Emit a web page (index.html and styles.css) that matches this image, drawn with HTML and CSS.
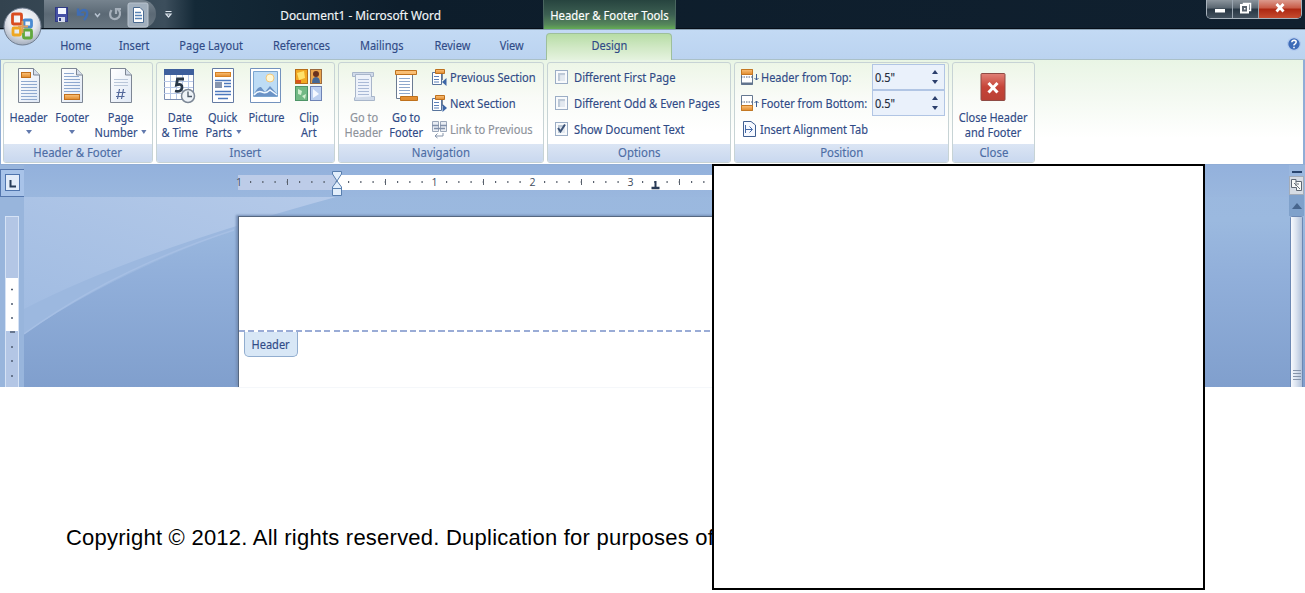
FILE: index.html
```
<!DOCTYPE html>
<html lang="en">
<head>
<meta charset="utf-8">
<title>Document1 - Microsoft Word</title>
<link rel="stylesheet" href="styles.css">
</head>
<body>
<svg class="defs" width="0" height="0">
  <defs>
    <linearGradient id="paper" x1="0" y1="0" x2="1" y2="1"><stop offset="0" stop-color="#fff"/><stop offset="1" stop-color="#dfe8f5"/></linearGradient>
    <linearGradient id="amber" x1="0" y1="0" x2="0" y2="1"><stop offset="0" stop-color="#fbc27a"/><stop offset="1" stop-color="#e08a2c"/></linearGradient>
    <radialGradient id="orb" cx=".5" cy=".35" r=".65"><stop offset="0" stop-color="#fff"/><stop offset=".6" stop-color="#e3e6ec"/><stop offset="1" stop-color="#a3adbd"/></radialGradient>
    <symbol id="page" viewBox="0 0 24 36"><path d="M1.5 .5H16.5L22.500 7V34.500H1.500Z" fill="url(#paper)" stroke="#7d8694"/><path d="M16.500 .5V7H22.500" fill="#d5deeb" stroke="#7d8694"/></symbol>
    <symbol id="section" viewBox="0 0 16 18"><path d="M1.500 4.500H10.500V16.500H1.500Z" fill="#fff" stroke="#58749c"/><path d="M3 8.500H8M3 11.500H8M3 14H8" stroke="#5d81b8"/><path d="M4.500 1.500H13.500V5.500H4.500Z" fill="url(#amber)" stroke="#bd701d"/><path d="M11.500 6V12" stroke="#7b8797"/></symbol>
  </defs>
</svg>

<div class="window">
  <header class="titlebar">
    <div class="quick">
      <svg width="130" height="29" viewBox="0 0 130 29">
        <rect x="11.500" y="7.500" width="12" height="14" fill="#4550a5" stroke="#303b83"/><path d="M14 8H22V14H14Z" fill="#f4f7ff"/><path d="M14 17H21V22H14Z" fill="#d5dbed"/><path d="M15 18H17V21H15Z" fill="#303c82"/>
        <path d="M34 8.500V14.500H40M34.500 14Q38 8 42.500 11Q45 14 40 20" fill="none" stroke="#3f6db4" stroke-width="2.400"/>
        <path d="M51 13.500L53.500 16.500L56 13.500" fill="none" stroke="#b7c3d0" stroke-width="1.500"/>
        <path d="M67.500 10Q65 14 67 17.500Q71 21 75 17Q77.500 12 74 9.500M77 9H72V14" fill="none" stroke="#a5afba" stroke-width="2.200"/>
        <rect x="84" y="3" width="20" height="24" rx="2" fill="#a1afbd" stroke="#bac4ce"/><path d="M89.500 7.500H96L99.500 11V22.500H89.500Z" fill="#fff" stroke="#4b6b91"/><path d="M91 12.500H97M91 15.500H98M91 18.500H98" stroke="#5783b5" stroke-width="1.500"/>
        <path d="M121.500 11.500H127.500M122 14L124.500 17L127 14Z" fill="none" stroke="#dbe3ec" stroke-width="1.200"/>
      </svg>
    </div>
    <div class="doc-title"><span class="t">Document1 - Microsoft Word</span></div>
    <div class="context"><span class="t">Header &amp; Footer Tools</span></div>
    <div class="winbtns">
      <span class="wb min"><svg width="25" height="18"><rect x="8" y="9" width="10" height="3.500" fill="#fff"/></svg></span>
      <span class="wb max"><svg width="25" height="18"><path d="M10.500 3.500H17.500V10.500H10.500Z" fill="none" stroke="#fff" stroke-width="1.500"/><path d="M8 5H15V12.500H8Z" fill="#59636e" stroke="#fff" stroke-width="2"/><path d="M11 8H12.500V9.500H11Z" fill="#fff"/></svg></span>
      <span class="wb close"><svg width="42" height="18"><path d="M17.500 4L24.500 11.500M24.500 4L17.500 11.500" stroke="#fff" stroke-width="2.800"/></svg></span>
    </div>
  </header>
  <svg class="orb" width="42" height="48" viewBox="0 0 42 48">
    <circle cx="19.500" cy="25.500" r="18.500" fill="url(#orb)" stroke="#6f7c8e"/>
    <g fill="none" stroke-width="2.800"><rect x="9.500" y="13" width="9" height="10" rx="1" stroke="#d94c20"/><rect x="21" y="19" width="7.500" height="7" rx="1" stroke="#498bd2"/><rect x="10" y="27" width="7.500" height="7" rx="1" stroke="#eea722"/><rect x="20.500" y="29" width="8" height="8" rx="1" stroke="#61a83e"/><path d="M15 25.500H25M19.500 20V32" stroke="#dba05f" stroke-width="2"/></g>
  </svg>

  <nav class="tabs">
    <a class="tab w48"><span class="t">Home</span></a>
    <a class="tab w68"><span class="t">Insert</span></a>
    <a class="tab w87"><span class="t">Page Layout</span></a>
    <a class="tab w92"><span class="t">References</span></a>
    <a class="tab w70"><span class="t">Mailings</span></a>
    <a class="tab w70"><span class="t">Review</span></a>
    <a class="tab w50"><span class="t">View</span></a>
    <a class="tab design"><span class="t">Design</span></a>
    <svg class="help" width="14" height="16" viewBox="0 0 14 16"><circle cx="7" cy="8" r="6.300" fill="#3e6cb8" stroke="#b6cdf0" stroke-width="1.200"/><path d="M4.800 6.300Q5 4.300 7.200 4.300Q9.300 4.500 9.200 6.200Q9 7.500 7 8.800V9.600M7 10.800V12.300" stroke="#fff" stroke-width="1.500" fill="none"/></svg>
  </nav>

  <section class="ribbon">
    <div class="group g-hf">
      <div class="body">
        <div class="big w48b"><svg width="24" height="36"><use href="#page"/><rect x="4.500" y="4.500" width="9" height="5" fill="url(#amber)" stroke="#c2701d"/><path d="M4 13.500H20M4 16.500H20M4 19.500H20M4 22.500H20M4 25.500H20M4 28.500H20M4 31.500H20" stroke="#8ea8cf"/></svg><span class="t">Header</span><i class="arr"></i></div>
        <div class="big w38b"><svg width="24" height="36"><use href="#page"/><path d="M4 5.500H14M4 8.500H19M4 11.500H20M4 14.500H20M4 17.500H20M4 20.500H20M4 23.500H20" stroke="#8ea8cf"/><rect x="4.500" y="26.500" width="15" height="5" fill="url(#amber)" stroke="#c2701d"/></svg><span class="t">Footer</span><i class="arr"></i></div>
        <div class="big w60b"><svg width="24" height="36"><use href="#page"/><path d="M5 11.500H19M5 14.500H19M5 17.500H19" stroke="#b9c6d9"/><path d="M10.500 21L8.500 31M14.500 21L12.500 31M7.500 24.500H16.500M7 28.500H15.500" stroke="#53689b" stroke-width="1.200"/></svg><span class="t">Page</span><span class="t">Number <i class="arr in"></i></span></div>
      </div>
      <div class="foot"><span class="t">Header &amp; Footer</span></div>
    </div>

    <div class="group g-ins">
      <div class="body">
        <div class="big w46b"><svg width="34" height="36"><path d="M1.500 1.500H30.500V31.500H1.500Z" fill="#fff" stroke="#7b8db1"/><path d="M1 1H31V7H1Z" fill="#3e5f9c"/><path d="M1 13.500H30M1 19.500H30M1 25.500H30M7.500 7V31M13.500 7V31M19.500 7V31M25.500 7V31" stroke="#b9c9e7"/><path d="M21 11H14.500L13.500 17Q19.500 15 19 20Q18 24.500 12 23" stroke="#293747" stroke-width="2.800" fill="none"/><circle cx="25" cy="28" r="6.500" fill="#eef3f8" stroke="#7c8795" stroke-width="1.500"/><path d="M25 23.500V28.500H29" fill="none" stroke="#4c5967" stroke-width="1.300"/></svg><span class="t">Date</span><span class="t">&amp; Time</span></div>
        <div class="big w40b"><svg width="24" height="36"><path d="M1.500 .5H22.500V34.500H1.500Z" fill="#fff" stroke="#647ba3"/><rect x="4.500" y="4.500" width="15" height="4" fill="url(#amber)" stroke="#d78224"/><path d="M4 12.500H20M13 15.500H20M13 18.500H20M4 23.500H20M4 26.500H20M7 30.500H17" stroke="#4c78bd" stroke-width="1.700"/><rect x="4" y="14" width="7" height="6" fill="#8796af"/></svg><span class="t">Quick</span><span class="t">Parts <i class="arr in"></i></span></div>
        <div class="big w46b"><svg width="32" height="36"><path d="M.5 .5H30.500V34.500H.5Z" fill="#fff" stroke="#7392bd"/><path d="M3.500 3.500H27.500V28.500H3.500Z" fill="#bddcf5" stroke="#7ba6d0"/><circle cx="20" cy="10" r="4" fill="#fff7d4" stroke="#f2c77c"/><path d="M4 26Q8 18 11 19L15 24L20 18L27 26V28H4Z" fill="#6b93c6"/><path d="M4 27Q8 22 12 24T20 22L27 27" stroke="#eff8ff" fill="none" stroke-width="1.500"/></svg><span class="t">Picture</span></div>
        <div class="big w40b"><svg width="28" height="36"><rect x=".5" y="1.500" width="12" height="14" fill="#f1a922" stroke="#b66d19"/><path d="M2 5L9 3L10 10L4 12Z" fill="#ffe26b"/><path d="M1 12H6V15H1Z" fill="#d8521b"/><rect x="15.500" y="1.500" width="11" height="14" fill="#e9a54d" stroke="#9a6a3e"/><circle cx="21" cy="6" r="3" fill="#6a321d"/><path d="M17 15Q17 9 21 9T25 15Z" fill="#456895"/><rect x=".5" y="18.500" width="12" height="14" fill="#72b984" stroke="#4d9467"/><path d="M3 21L7 23L6 27L3 26ZM7 28L11 26L10 31Z" fill="#d3efd0"/><rect x="15.500" y="18.500" width="11" height="14" fill="#bcd0f0" stroke="#6e83b5"/><path d="M18 21L24 26L18 30Z" fill="#f5f9ff"/></svg><span class="t">Clip</span><span class="t">Art</span></div>
      </div>
      <div class="foot"><span class="t">Insert</span></div>
    </div>

    <div class="group g-nav">
      <div class="body">
        <div class="big w48c off"><svg width="26" height="36"><path d="M4.500 6.500H20.500V30.500H4.500Z" fill="#edf2fa" stroke="#a9b6ca"/><path d="M1.500 8.500V4.500H22.500V8.500H19.500V6.500H4.500V8.500ZM20 28.500H23.500V32.500H3.500V29.500" fill="#d1dbea" stroke="#a8b6ca"/><path d="M7 11.500H18M7 14.500H18M7 17.500H18M7 20.500H18M7 23.500H18M7 26.500H18" stroke="#aabad6"/></svg><span class="t">Go to</span><span class="t">Header</span></div>
        <div class="big w38b"><svg width="26" height="36"><path d="M3.500 5.500H19.500V30.500H3.500Z" fill="#fff" stroke="#6b7b92"/><path d="M2.500 2.500H23.500V6.500H2.500ZM7.500 28.500H24.500V32.500H7.500Z" fill="url(#amber)" stroke="#bf711c"/><path d="M6 10.500H17M6 13.500H17M6 16.500H17M6 19.500H17M6 22.500H17M6 25.500H17" stroke="#8fa8cc"/></svg><span class="t">Go to</span><span class="t">Footer</span></div>
        <div class="rows nav-rows">
          <div class="row"><svg width="18" height="19"><use href="#section" width="16" height="18"/><path d="M15.500 10V18L11 14Z" fill="#3d66a6"/></svg><span class="t">Previous Section</span></div>
          <div class="row"><svg width="18" height="19"><use href="#section" width="16" height="18"/><path d="M11.500 10V18L16 14Z" fill="#3d66a6"/></svg><span class="t">Next Section</span></div>
          <div class="row off"><svg width="18" height="19"><path d="M1.500 1.500H7.500V11.500H1.500ZM9.500 1.500H15.500V11.500H9.500Z" fill="#e9edf3" stroke="#9aa6b9"/><path d="M1 5.500H8M9 5.500H16M3 8.500H14" stroke="#8190aa" stroke-width="1.500"/><path d="M12 13V16H4M6.500 13.500L4 16L6.500 18" fill="none" stroke="#8594aa"/></svg><span class="t">Link to Previous</span></div>
        </div>
      </div>
      <div class="foot"><span class="t">Navigation</span></div>
    </div>

    <div class="group g-opt">
      <div class="body">
        <div class="rows">
          <div class="row"><i class="check"></i><span class="t">Different First Page</span></div>
          <div class="row"><i class="check"></i><span class="t">Different Odd &amp; Even Pages</span></div>
          <div class="row"><i class="check"><svg width="11" height="11"><path d="M2 5L4.500 8.500L9 1.500" fill="none" stroke="#3c5378" stroke-width="2"/></svg></i><span class="t">Show Document Text</span></div>
        </div>
      </div>
      <div class="foot"><span class="t">Options</span></div>
    </div>

    <div class="group g-pos">
      <div class="body">
        <div class="rows pos-rows">
          <div class="row"><svg width="20" height="18"><path d="M.5 1.500H11.500V16.500H.5Z" fill="#fff" stroke="#657891"/><path d="M.5 1.500H11.500V6.500H.5Z" fill="url(#amber)" stroke="#c57822"/><path d="M0 9H12" stroke="#4b6080" stroke-dasharray="1.500 1"/><path d="M0 15.500H12" stroke="#60738c" stroke-width="2"/><path d="M15.500 6V12M13.500 10L15.500 12L17.500 10" stroke="#3c5e94" fill="none"/></svg><span class="t">Header from Top:</span></div>
          <div class="row"><svg width="20" height="18"><path d="M.5 1.500H11.500V16.500H.5Z" fill="#fff" stroke="#657891"/><path d="M.5 11.500H11.500V16.500H.5Z" fill="url(#amber)" stroke="#c57822"/><path d="M0 8H12" stroke="#4b6080" stroke-dasharray="1.500 1"/><path d="M15.500 7V13M13.500 9L15.500 7L17.500 9" stroke="#3c5e94" fill="none"/></svg><span class="t">Footer from Bottom:</span></div>
          <div class="row"><svg width="19" height="18"><path d="M2.500 1.500H10L14.500 5V16.500H2.500Z" fill="#f6f9ff" stroke="#405f91"/><path d="M4.500 5V13M5 9.500H11M8.500 6.500L11.500 9.500L8.500 12.500" fill="none" stroke="#4469a8"/></svg><span class="t">Insert Alignment Tab</span></div>
        </div>
        <div class="spins">
          <div class="spin"><span class="t">0.5"</span><svg width="8" height="16"><path d="M1 5L4 1L7 5ZM1 11L4 15L7 11Z" fill="#2b3f6c"/></svg></div>
          <div class="spin"><span class="t">0.5"</span><svg width="8" height="16"><path d="M1 5L4 1L7 5ZM1 11L4 15L7 11Z" fill="#2b3f6c"/></svg></div>
        </div>
      </div>
      <div class="foot"><span class="t">Position</span></div>
    </div>

    <div class="group g-close">
      <div class="body">
        <div class="big w80b"><svg width="26" height="36"><defs><linearGradient id="red" x1="0" y1="0" x2="0" y2="1"><stop offset="0" stop-color="#e18177"/><stop offset=".5" stop-color="#c64438"/><stop offset="1" stop-color="#b94034"/></linearGradient></defs><rect x="1" y="5.500" width="24" height="27" rx="1" fill="url(#red)" stroke="#8f4b45"/><path d="M8.500 15L17.500 24.500M17.500 15L8.500 24.500" stroke="#fff" stroke-width="3"/></svg><span class="t">Close Header</span><span class="t">and Footer</span></div>
      </div>
      <div class="foot"><span class="t">Close</span></div>
    </div>
  </section>

  <main class="workspace">
    <svg class="swoosh" width="400" height="190" viewBox="0 0 400 190">
      <defs><linearGradient id="glow" x1="0" y1="1" x2="1" y2="0"><stop offset="0" stop-color="#a1bce2"/><stop offset="1" stop-color="#b5cae9"/></linearGradient></defs>
      <path d="M0 0H312Q120 55 0 137Z" fill="#9cb8df"/>
      <path d="M0 137Q90 72 210 33" fill="none" stroke="#a6bfe4" stroke-width="1.500"/>
      <path d="M0 0H312Q110 55 0 112Z" fill="url(#glow)"/>
    </svg>
    <div class="side">
      <div class="tabsel"><svg width="16" height="18"><rect x=".5" y=".5" width="14" height="16" fill="#e3ecf9" stroke="#4f74ad"/><path d="M5.500 6V12.500H11" fill="none" stroke="#263b59" stroke-width="2"/></svg></div>
      <svg class="vruler" width="14" height="171"><path d="M0 0H14V171H0Z" fill="#b3c6e5"/><path d="M.5 0V171M13.500 0V171M0 .5H14" stroke="#d5e2f5"/><path d="M1 62H13V115H1Z" fill="#fff"/><path d="M6 73.500H8M6 88H8M6 102H8M5 116H10M6 131H8M6 145H8M6 160H8" stroke="#4f5c71" stroke-width="1.300"/></svg>
    </div>
    <div class="canvas">
      <div class="hruler">
        <svg width="494" height="30" viewBox="234 167 494 30">
          <path d="M238 175H337V190H238Z" fill="#bdcce8"/><path d="M337 175H728V190H337Z" fill="#fff"/>
          <path d="M250 182H716" stroke="#59616d" stroke-width="2" stroke-dasharray="1.200 11.050"/>
          <path d="M287.500 179V185M385.500 179V185M483.500 179V185M581.500 179V185M679.500 179V185" stroke="#59616d"/>
          <g class="nums"><rect x="431" y="177" width="7" height="10" fill="#fff"/><rect x="529" y="177" width="7" height="10" fill="#fff"/><rect x="627" y="177" width="7" height="10" fill="#fff"/><text x="239" y="186">1</text><text x="434.500" y="186">1</text><text x="532.500" y="186">2</text><text x="630.500" y="186">3</text></g>
          <path d="M332.500 171.500H341.500V174L337 181L341.500 187V195.500H332.500V187L337 181L332.500 174ZM332.500 188.500H341.500" fill="#e2eefb" stroke="#587eae"/>
          <path d="M655.500 181V187" stroke="#293b56" stroke-width="2"/><path d="M651.500 188H659.500" stroke="#293b56" stroke-width="2.500"/>
        </svg>
      </div>
      <div class="sheet"><div class="hline"></div><div class="htag"><span class="t">Header</span></div></div>
    </div>
    <svg class="scroll" width="16" height="222" viewBox="0 0 16 222">
      <defs><linearGradient id="thumb"><stop offset="0" stop-color="#fafcff"/><stop offset=".45" stop-color="#dce4f0"/><stop offset="1" stop-color="#aebfd8"/></linearGradient></defs>
      <rect x="3" y="6" width="10" height="2" fill="#29456f"/>
      <rect x=".5" y="11.500" width="14" height="18" fill="#d6dce4" stroke="#a3acb9"/><path d="M2.500 14.500H7V16.500H12.500V25.500H7.500V22.500H2.500Z" fill="#f9faf8" stroke="#5f6874"/><path d="M5 18L11 24M7 16V21M9 18V20" stroke="#69717b"/>
      <rect x="0" y="30" width="15" height="21" fill="#7fa1cb"/><path d="M3 44L8 38L13 44Z" fill="#47658d"/>
      <rect x="1.500" y="51.500" width="12" height="175" rx="1" fill="url(#thumb)" stroke="#6c88b3"/>
      <path d="M4 205.500H12M4 208.500H12M4 211.500H12M4 214.500H12" stroke="#8694aa"/>
    </svg>
  </main>
</div>
<footer class="copyright">Copyright © 2012. All rights reserved. Duplication for purposes of</footer>
<div class="cover"></div>
</body>
</html>
```
FILE: styles.css
```
* { box-sizing: border-box; }
body { margin: 0; width: 1305px; height: 593px; background: #fff; overflow: hidden; position: relative; font: 12.5px/15px "Noto Sans", "Open Sans", sans-serif; color: #2f4a86; }
svg { display: block; flex: none; }
.defs { position: absolute; }
.t { display: block; white-space: nowrap; transform: scaleX(.88); flex: none; -webkit-text-stroke: .15px; }
.window { height: 387px; display: flex; flex-direction: column; position: relative; }

.titlebar { height: 30px; flex: none; display: flex; background: linear-gradient(90deg, #33434f 0, #3c4e5c 165px, #142937 195px, #0d1d2b 400px, #10202f 100%); border-bottom: 1px solid #8ba2b5; box-shadow: inset 0 -1px #060e18; }
.quick { width: 112px; height: 28px; margin-left: 44px; background: linear-gradient(#76838e, #5b6975 50%, #697782); border-radius: 0 14px 14px 0; }
.doc-title { width: 387px; padding: 8px 0 0 22px; display: flex; justify-content: center; color: #f1f5f8; }
.doc-title .t { transform: scaleX(.95); }
.context { width: 133px; padding-top: 8px; display: flex; justify-content: center; color: #fff; background: linear-gradient(#27443f, #3c5f52 50%, #56875b 85%, #64ad54); border: solid #49655f; border-width: 0 1px; }
.context .t { transform: scaleX(.905); }
.winbtns { margin-left: auto; margin-right: 3px; height: 19px; display: flex; border: 1px solid #a8b2bc; border-top: 0; border-radius: 0 0 5px 5px; overflow: hidden; }
.wb { background: linear-gradient(#8b949c, #596570 45%, #283643 50%, #44525f); }
.wb + .wb { border-left: 1px solid #9ba6b1; }
.wb.close { background: linear-gradient(#dc9a8d, #c85a46 45%, #ac2712 50%, #c54b2f); }
.orb { position: absolute; left: 3px; top: 1px; }

.tabs { height: 30px; flex: none; display: flex; padding-left: 52px; background: linear-gradient(#c3daf4, #bbd3f0); border-bottom: 1px solid #aac0c8; }
.tab { display: flex; justify-content: center; padding-top: 8px; }
.w48 { width: 48px; } .w68 { width: 68px; } .w87 { width: 87px; } .w92 { width: 92px; } .w70 { width: 70px; } .w50 { width: 50px; }
.design { width: 126px; margin: 3px 0 -1px 9px; padding-top: 4px; background: linear-gradient(#b7dda5, #d0e8c4 50%, #e5f3df); border: 1px solid #9ebf9b; border-bottom: 0; border-radius: 4px 4px 0 0; }
.help { margin: 6px 4px 0 auto; }

.ribbon { height: 105px; flex: none; display: flex; padding: 2px 0 2px 3px; background: linear-gradient(#e9f5e5, #f5faf3 40%, #fff 75%); border: solid #90add6; border-width: 0 2px 1px 1px; }
.group { height: 101px; border: 1px solid #c7d3d5; border-radius: 3px; margin-right: 3px; display: flex; flex-direction: column; overflow: hidden; background: linear-gradient(#edf6e7, #f9fbf7 35%, #fff 70%); }
.g-hf { width: 150px; margin-left: -1px; } .g-ins { width: 179px; } .g-nav { width: 206px; } .g-opt { width: 184px; } .g-pos { width: 215px; } .g-close { width: 83px; }
.body { height: 81px; flex: none; display: flex; }
.foot { flex: 1; display: flex; justify-content: center; align-items: center; padding-bottom: 1px; background: linear-gradient(#dbe5f4, #c9d8ef); color: #4d6da5; }
.foot .t { transform: scaleX(.91); }
.big { display: flex; flex-direction: column; align-items: center; padding-top: 5px; }
.big > svg { margin-bottom: 6px; }
.w48b { width: 50px; } .w38b { width: 36px; } .w60b { width: 62px; } .w46b { width: 46px; } .w48c { width: 49px; } .w40b { width: 40px; } .w80b { width: 80px; }
.arr { display: block; border: 3px solid transparent; border-top: 4px solid #6279ad; border-bottom: 0; margin-top: 5px; }
.arr.in { display: inline-block; margin: 0 0 3px 1px; }
.off { color: #8d929a; }
.rows { display: flex; flex-direction: column; padding-top: 1px; }
.row { height: 26px; display: flex; align-items: center; }
.row .t { transform-origin: left; width: 0; transform: scaleX(.895); }
.nav-rows { padding-left: 7px; } .nav-rows .row { gap: 1px; }
.g-opt .rows { padding-left: 7px; } .g-opt .row { gap: 6px; }
.g-nav .row .t { transform: scaleX(.89); }
.pos-rows { width: 137px; padding-left: 6px; }
.pos-rows .row .t { transform: scaleX(.88); }
.check { width: 13px; height: 14px; border: 1px solid #9badc5; background: #e3e9f0; box-shadow: inset 0 0 0 2px #f8fafc, inset 2px 2px 1px 2px #bcc8d6; }
.spins { padding-top: 1px; }
.spin { width: 73px; height: 26px; border: 1px solid #b1c5e4; background: #eaf1fb; display: flex; align-items: center; justify-content: space-between; padding: 0 5px 0 2px; color: #222c3d; }
.spin .t { transform-origin: left; }

.workspace { flex: 1; display: flex; position: relative; background: linear-gradient(#9ab7de, #9bb9df 25%, #91afda 50%, #809fcd); }
.swoosh { position: absolute; left: 24px; top: 32px; }
.side { width: 24px; background: #98b5dc; position: relative; }
.tabsel { width: 25px; height: 28px; margin-top: 4px; padding: 4px 0 0 4px; border: 1px solid #5577ae; background: #a8c3e9; }
.vruler { margin: 19px 0 0 5px; }
.canvas { flex: 1; position: relative; }
.hruler { height: 32px; padding: 2px 0 0 210px; background: linear-gradient(#93b1dc, #9ab7de); }
.nums { font: 10.500px "Open Sans", sans-serif; fill: #424c5e; text-anchor: middle; }
.sheet { margin: 19px 0 0 214px; width: 490px; height: 171px; background: #fff; border: solid #556780; border-width: 1px 0 0 1px; padding-top: 113px; box-shadow: -2px -1px 2px #7690b7; }
.hline { height: 2px; background: repeating-linear-gradient(90deg, #9aacd6 0 6px, transparent 6px 9.500px); }
.htag { width: 54px; height: 25px; margin-left: 5px; border: 1px solid #91adcf; border-top: 0; border-radius: 0 0 5px 5px; background: #d8e7f6; display: flex; justify-content: center; align-items: center; }
.copyright { padding: 137px 0 0 66px; font: 22px/28px "Liberation Sans", Arial, sans-serif; color: #000; white-space: nowrap; letter-spacing: .235px; }
.cover { position: absolute; left: 712px; top: 164px; width: 493px; height: 426px; background: #fff; border: 2px solid #000; }
```
